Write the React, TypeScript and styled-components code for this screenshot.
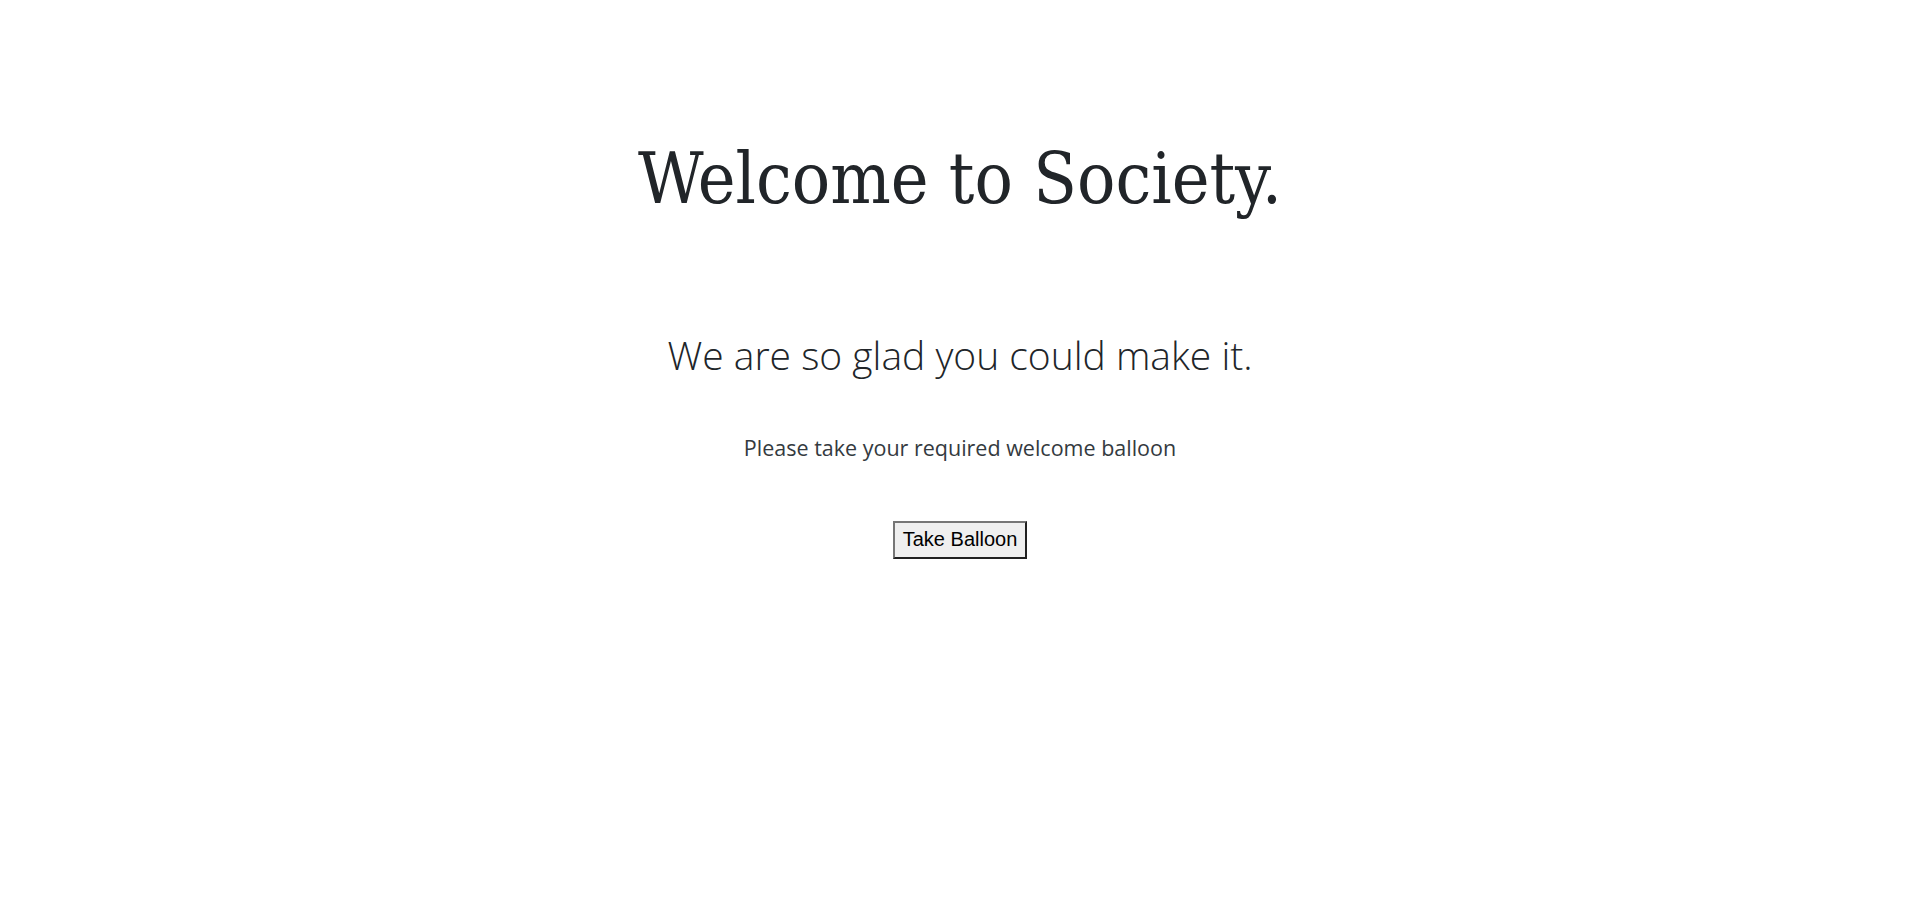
import React from "react";
import styled, { createGlobalStyle } from "styled-components";

const Global = createGlobalStyle`
  html, body { margin: 0; padding: 0; background: #fff; }
  body { font-family: "Open Sans", sans-serif; }
`;

const Page = styled.main`
  display: flex;
  flex-direction: column;
  align-items: center;
  text-align: center;
  padding-top: 131px;
`;

const Title = styled.h1`
  margin: 0;
  font-family: "DejaVu Serif", serif;
  font-stretch: condensed;
  font-weight: 400;
  font-size: 71px;
  line-height: 96px;
  color: #212529;
`;

const Subtitle = styled.h2`
  margin: 104px 0 0;
  font-family: "Open Sans", sans-serif;
  font-weight: 300;
  font-size: 39px;
  line-height: 48px;
  color: #212529;
`;

const Lead = styled.p`
  margin: 54px 0 0;
  font-family: "Open Sans", sans-serif;
  font-weight: 400;
  font-size: 21.5px;
  line-height: 30px;
  color: #343a40;
`;

const Button = styled.button`
  margin-top: 58px;
  font-family: "Liberation Sans", Arial, sans-serif;
  font-size: 20px;
  line-height: 23px;
  padding: 5px 8px 6px;
  background: #efefef;
  color: #000;
  border: 2px outset #767676;
  border-radius: 0;
`;

export default function App() {
  return (
    <>
      <Global />
      <Page>
        <Title>Welcome to Society.</Title>
        <Subtitle>We are so glad you could make it.</Subtitle>
        <Lead>Please take your required welcome balloon</Lead>
        <Button>Take Balloon</Button>
      </Page>
    </>
  );
}
